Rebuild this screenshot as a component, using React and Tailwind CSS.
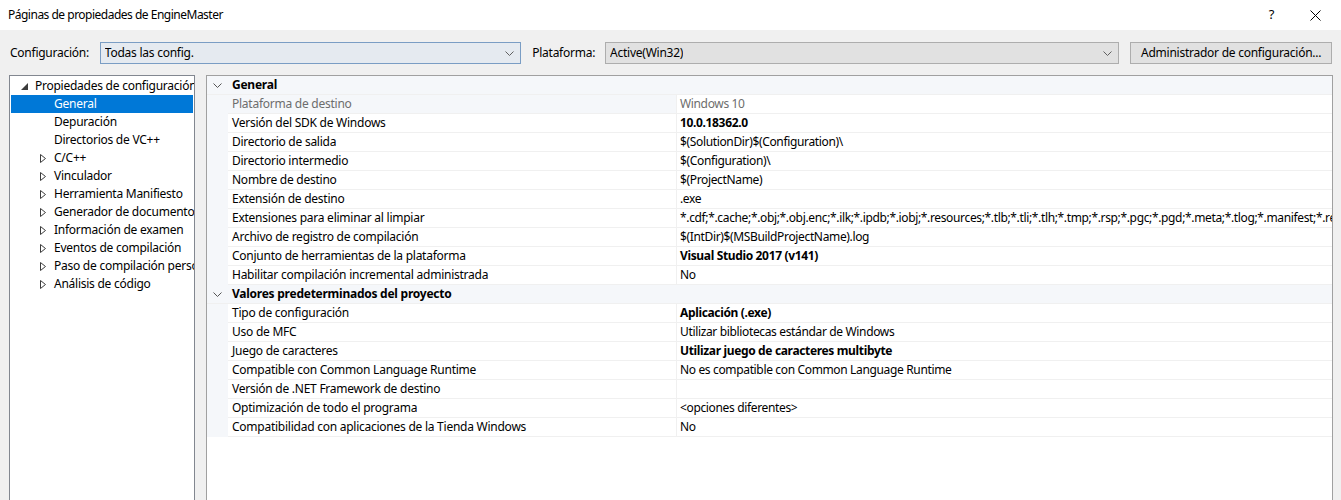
import React from 'react';

const tree = [
  { label: 'General', selected: true },
  { label: 'Depuración' },
  { label: 'Directorios de VC++' },
  { label: 'C/C++', arrow: true },
  { label: 'Vinculador', arrow: true },
  { label: 'Herramienta Manifiesto', arrow: true },
  { label: 'Generador de documentos XML', arrow: true },
  { label: 'Información de examen', arrow: true },
  { label: 'Eventos de compilación', arrow: true },
  { label: 'Paso de compilación personalizado', arrow: true },
  { label: 'Análisis de código', arrow: true },
];

const sections = [
  {
    title: 'General',
    rows: [
      { k: 'Plataforma de destino', v: 'Windows 10', readonly: true },
      { k: 'Versión del SDK de Windows', v: '10.0.18362.0', bold: true },
      { k: 'Directorio de salida', v: '$(SolutionDir)$(Configuration)\\' },
      { k: 'Directorio intermedio', v: '$(Configuration)\\' },
      { k: 'Nombre de destino', v: '$(ProjectName)' },
      { k: 'Extensión de destino', v: '.exe' },
      {
        k: 'Extensiones para eliminar al limpiar',
        v: '*.cdf;*.cache;*.obj;*.obj.enc;*.ilk;*.ipdb;*.iobj;*.resources;*.tlb;*.tli;*.tlh;*.tmp;*.rsp;*.pgc;*.pgd;*.meta;*.tlog;*.manifest;*.res;*.pch;*.exp;*.idb;*.rep;*.xdc;*.pdb',
      },
      { k: 'Archivo de registro de compilación', v: '$(IntDir)$(MSBuildProjectName).log' },
      { k: 'Conjunto de herramientas de la plataforma', v: 'Visual Studio 2017 (v141)', bold: true },
      { k: 'Habilitar compilación incremental administrada', v: 'No' },
    ],
  },
  {
    title: 'Valores predeterminados del proyecto',
    rows: [
      { k: 'Tipo de configuración', v: 'Aplicación (.exe)', bold: true },
      { k: 'Uso de MFC', v: 'Utilizar bibliotecas estándar de Windows' },
      { k: 'Juego de caracteres', v: 'Utilizar juego de caracteres multibyte', bold: true },
      { k: 'Compatible con Common Language Runtime', v: 'No es compatible con Common Language Runtime' },
      { k: 'Versión de .NET Framework de destino', v: '' },
      { k: 'Optimización de todo el programa', v: '<opciones diferentes>' },
      { k: 'Compatibilidad con aplicaciones de la Tienda Windows', v: 'No' },
    ],
  },
];

const Chevron = ({ className }) => (
  <svg width="9" height="5" viewBox="0 0 9 5" className={className}>
    <path d="M0.5 0.5 L4.5 4.5 L8.5 0.5" fill="none" stroke="currentColor" strokeWidth="1" />
  </svg>
);

const Combo = ({ text, className }) => (
  <div className={`h-[22px] flex items-center justify-between pl-[4px] pr-[6px] border ${className}`}>
    <span className="truncate">{text}</span>
    <Chevron className="text-[#606060]" />
  </div>
);

const App = () => {
  return (
    <div className="w-[1341px] h-[500px] overflow-hidden bg-[#f0f0f0] text-[12px] text-black font-['Noto_Sans',sans-serif] tracking-[-0.25px] flex flex-col">
      {/* title bar */}
      <div className="h-[30px] shrink-0 bg-white flex items-center justify-between pl-[8px]">
        <span className="tracking-[-0.5px]">Páginas de propiedades de EngineMaster</span>
        <div className="flex items-center h-full pr-[3px]">
          <span className="w-[46px] text-center text-[13px] pl-[5px]">?</span>
          <div className="w-[46px] flex justify-center">
            <svg width="11" height="11" viewBox="0 0 11 11">
              <path d="M0.5 0.5 L10.5 10.5 M10.5 0.5 L0.5 10.5" stroke="#000" strokeWidth="1" />
            </svg>
          </div>
        </div>
      </div>

      {/* configuration row */}
      <div className="h-[45px] shrink-0 flex items-start pt-[12px] pl-[10px] pr-[9px]">
        <span className="w-[90px] leading-[22px]">Configuración:</span>
        <Combo text="Todas las config." className="w-[422px] bg-[#e5eaf0] border-[#7a9dc4]" />
        <span className="ml-[11px] w-[73px] leading-[22px]">Plataforma:</span>
        <Combo text="Active(Win32)" className="w-[515px] bg-[#e1e1e1] border-[#adadad]" />
        <div className="ml-[11px] w-[202px] h-[22px] flex items-center justify-center bg-[#e1e1e1] border border-[#adadad]">
          Administrador de configuración...
        </div>
      </div>

      {/* panels */}
      <div className="flex-1 flex pl-[9px] pr-[8px] gap-[11px] min-h-0">
        {/* tree */}
        <div className="w-[186px] shrink-0 bg-white border border-[#828790] border-b-0 pt-[1px] px-[1px] overflow-hidden">
          <div className="h-[18px] flex items-center whitespace-nowrap">
            <div className="w-[24px] shrink-0 flex justify-end pr-[7px]">
              <svg width="7" height="7" viewBox="0 0 7 7" className="block">
                <polygon points="7,0 7,7 0,7" fill="#3c3c3c" />
              </svg>
            </div>
            <span>Propiedades de configuración</span>
          </div>
          {tree.map((t) => (
            <div
              key={t.label}
              className={`h-[18px] flex items-center whitespace-nowrap ${t.selected ? 'bg-[#0078d7] text-white' : ''}`}
            >
              <div className="w-[43px] shrink-0 flex justify-end pr-[8px]">
                {t.arrow && (
                  <svg width="6" height="9" viewBox="0 0 6 9">
                    <path d="M0.5 0.5 L5.5 4.5 L0.5 8.5 Z" fill="none" stroke="#3c3c3c" strokeWidth="1" />
                  </svg>
                )}
              </div>
              <span>{t.label}</span>
            </div>
          ))}
        </div>

        {/* property grid */}
        <div className="flex-1 bg-white border border-[#a0a0a0] border-b-0 overflow-hidden">
          {sections.map((s) => (
            <div key={s.title}>
              <div className="h-[19px] flex items-center bg-[#f5f7fa] border-b border-[#f0f0f0]">
                <div className="w-[21px] flex justify-center">
                  <Chevron className="text-[#555]" />
                </div>
                <span className="pl-[4px] font-bold">{s.title}</span>
              </div>
              {s.rows.map((r) => (
                <div key={r.k} className="h-[19px] flex">
                  <div className="w-[21px] shrink-0 bg-[#f5f7fa]" />
                  <div
                    className={`w-[449px] shrink-0 flex items-center pl-[4px] border-b border-r border-[#f0f0f0] whitespace-nowrap ${r.readonly ? 'bg-[#f5f7fa] text-[#6d6d6d]' : ''}`}
                  >
                    {r.k}
                  </div>
                  <div
                    className={`flex-1 min-w-0 flex items-center pl-[3px] border-b border-[#f0f0f0] whitespace-nowrap overflow-hidden tracking-[-0.35px] ${r.bold ? 'font-bold' : ''} ${r.readonly ? 'text-[#6d6d6d]' : ''}`}
                  >
                    {r.v}
                  </div>
                </div>
              ))}
            </div>
          ))}
        </div>
      </div>
    </div>
  );
};

export default App;
